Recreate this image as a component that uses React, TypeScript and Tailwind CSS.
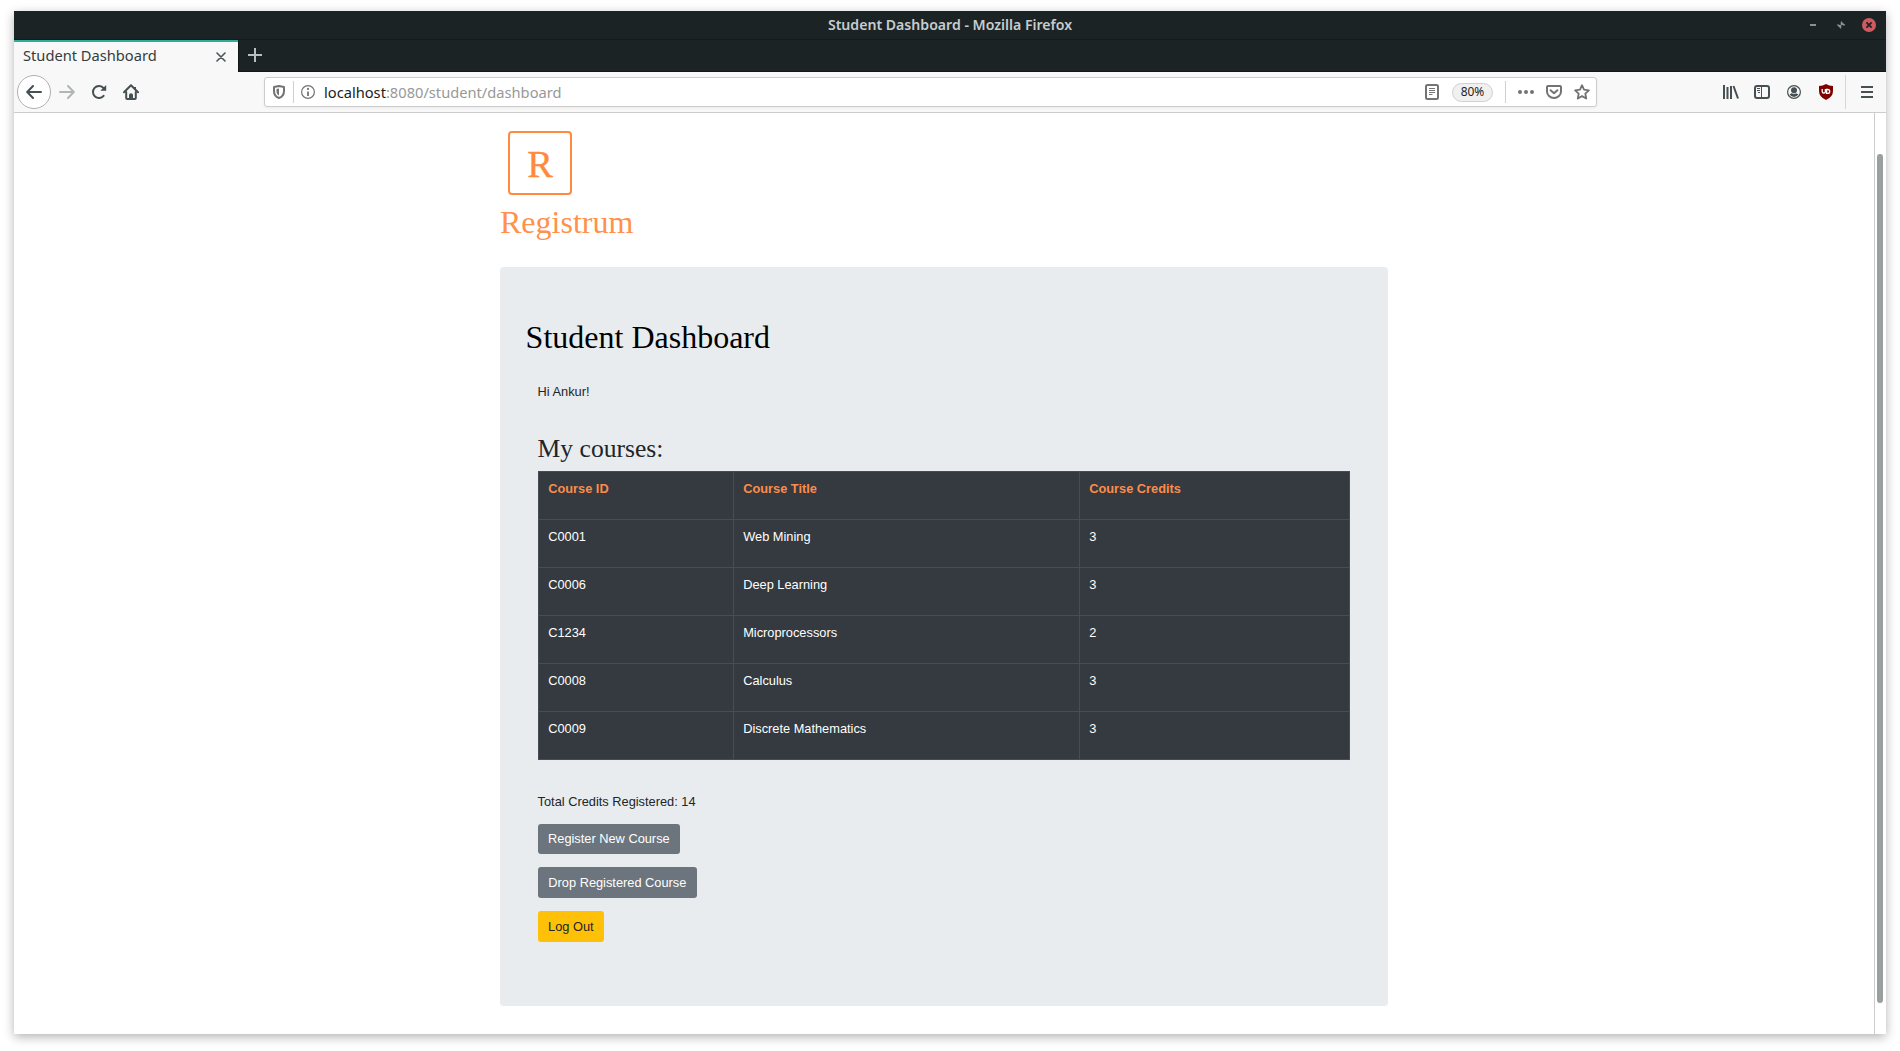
import React from "react";

const courses = [
  { id: "C0001", title: "Web Mining", credits: 3 },
  { id: "C0006", title: "Deep Learning", credits: 3 },
  { id: "C1234", title: "Microprocessors", credits: 2 },
  { id: "C0008", title: "Calculus", credits: 3 },
  { id: "C0009", title: "Discrete Mathematics", credits: 3 },
];

type IconProps = { className?: string; children: React.ReactNode };

function Icon({ className = "", children }: IconProps) {
  return (
    <svg
      viewBox="0 0 16 16"
      fill="none"
      stroke="currentColor"
      strokeWidth="2"
      strokeLinecap="round"
      strokeLinejoin="round"
      className={`size-4 shrink-0 ${className}`}
    >
      {children}
    </svg>
  );
}

function TitleBar() {
  return (
    <div className="relative flex h-7 shrink-0 items-center justify-center">
      <span className="text-[14.1px] leading-7 font-semibold text-[#c6cdd0]">Student Dashboard - Mozilla Firefox</span>
      <div className="absolute top-0 right-[10px] flex h-7 items-center">
        <div className="mr-[21px] h-[2px] w-[6px] bg-[#899294]" />
        <svg viewBox="0 0 8 8" fill="#899294" className="mr-[17px] size-2">
          <path d="M4 0v3.500H8V4.500H6.500L3.500 3.500zM4 8V4H0V3.500h1.500L4.500 4.500z" />
          <path d="M4 0L8 4H4zM0 4h4v4z" />
        </svg>
        <svg viewBox="0 0 14 14" className="size-3.5">
          <circle cx="7" cy="7" r="7" fill="#d05a61" />
          <path d="M4.4 4.4l5.2 5.2M9.6 4.4L4.4 9.6" stroke="#1c2325" strokeWidth="1.8" />
        </svg>
      </div>
    </div>
  );
}

function TabStrip() {
  return (
    <div className="flex h-[33px] shrink-0 border-t border-[#151b1c]">
      <div className="flex w-[224px] items-center border-t-2 border-[#2eae98] bg-[#f8f8f8] pr-3 pl-[9px]">
        <span className="flex-1 pb-[5px] text-[14.67px] leading-5 text-[#343c3e]">Student Dashboard</span>
        <svg viewBox="0 0 10 10" stroke="#4c5356" strokeWidth="1.6" strokeLinecap="round" className="-mt-px size-[10px]">
          <path d="M1 1l8 8M9 1L1 9" />
        </svg>
      </div>
      <div className="flex flex-1 items-center border-b border-l border-[#111617] pl-[9px]">
        <svg viewBox="0 0 14 14" stroke="#b9bfc1" strokeWidth="2" className="-mt-px size-3.5">
          <path d="M7 0v14M0 7h14" />
        </svg>
      </div>
    </div>
  );
}

function AddressBar() {
  return (
    <div className="ml-[125px] flex h-[30px] w-[1333px] items-center rounded-[3px] border border-[#cccccc] bg-white pl-[7px] text-[#737373] shadow-[0_1px_3px_rgba(0,0,0,0.06)]">
      <svg viewBox="0 0 12 14" fill="none" className="ml-px h-3.5 w-3 shrink-0">
        <path
          d="M1 1.9Q3.5 1.6 6 1Q8.500 1.600 11 1.900V6C11 9.500 9 12 6 13C3 12 1 9.500 1 6Z"
          stroke="#737373"
          strokeWidth="2"
          strokeLinejoin="round"
        />
        <path d="M6 3.500Q4.500 3.900 3.500 4V6.500C3.500 8.500 4.500 9.800 6 10.500Z" fill="#737373" />
      </svg>
      <div className="ml-2 h-[22px] w-px bg-[#cfcfcf]" />
      <svg viewBox="0 0 14 14" fill="none" className="ml-[7px] size-3.5 shrink-0">
        <circle cx="7" cy="7" r="6.4" stroke="#737373" strokeWidth="1.2" />
        <circle cx="7" cy="3.900" r="1.1" fill="#737373" />
        <path d="M7 6.500v4.500" stroke="#737373" strokeWidth="1.8" />
      </svg>
      <div className="ml-[9px] flex-1 text-[14.67px] leading-5 text-[#989898]">
        <span className="text-[#1c2022]">localhost</span>:8080/student/dashboard
      </div>
      <svg viewBox="0 0 14 16" fill="none" stroke="#737373" className="h-4 w-3.5 shrink-0">
        <rect x="1" y="1" width="12" height="14" rx="1.500" strokeWidth="2" />
        <path d="M4 4.500h6M4 6.500h6M4 8.500h6M4 10.500h3.500" strokeWidth="1" />
      </svg>
      <div className="ml-[13px] flex h-[19px] w-[41px] items-center justify-center rounded-full border border-[#d0d0d0] bg-[#f0f0f0] text-[12px] leading-none text-[#1f2426]">
        80%
      </div>
      <div className="ml-3 h-[22px] w-px bg-[#cfcfcf]" />
      <svg viewBox="0 0 16 4" fill="#737373" className="ml-3 h-1 w-4 shrink-0">
        <circle cx="2" cy="2" r="2" />
        <circle cx="8" cy="2" r="2" />
        <circle cx="14" cy="2" r="2" />
      </svg>
      <Icon className="ml-3">
        <path d="M2 2h12q1 0 1 1v4.500a7 6.500 0 0 1-14 0V3q0-1 1-1z" />
        <path d="M4.600 6.200L8 9.300l3.400-3.100" />
      </Icon>
      <Icon className="mr-[6px] ml-3">
        <path
          strokeWidth="1.8"
          d="M8 1.200l2 4.500 4.900.6-3.600 3.300.95 4.900L8 12.100l-4.250 2.400.95-4.900L1.100 6.300 6 5.700z"
        />
      </Icon>
    </div>
  );
}

function ToolBar() {
  return (
    <div className="flex h-[41px] shrink-0 items-center border-b border-[#cccccc] bg-[#f8f8f8] pl-[3px] text-[#464f52]">
      <div className="flex size-[34px] items-center justify-center rounded-full border border-[#b0b0b0] bg-white">
        <Icon>
          <path d="M15 8H1.500M7 2L1.200 8 7 14" />
        </Icon>
      </div>
      <Icon className="ml-2 text-[#b2b5b6]">
        <path d="M1 8h13.500M9 2l5.800 6L9 14" />
      </Icon>
      <Icon className="ml-4">
        <path d="M12.600 11.800A6 6 0 1 1 12.200 3.700" />
        <path d="M15.200 1v5.800H9.300z" fill="currentColor" stroke="none" />
      </Icon>
      <Icon className="ml-4">
        <path d="M1 8.300L8 1.300l7 7" />
        <path d="M3.200 8v6q0 1 1 1h7.600q1 0 1-1V8" />
        <path d="M6 15v-4q0-1.800 2-1.800t2 1.800v4z" fill="currentColor" stroke="none" />
        <path d="M12 3v2" strokeLinecap="butt" />
      </Icon>
      <AddressBar />
      <div className="ml-[126px] flex items-center">
        <svg viewBox="0 0 16 14" fill="none" stroke="currentColor" className="h-3.5 w-4">
          <path d="M1 0v14M4.500 2v12M8 1v13M10.500 1L15 13.500" strokeWidth="2" />
        </svg>
        <svg viewBox="0 0 16 14" fill="none" stroke="currentColor" className="ml-[15px] h-3.5 w-4">
          <rect x="1" y="1" width="14" height="12" rx="2" strokeWidth="2" />
          <path d="M7.500 1v12" strokeWidth="1" />
          <path d="M3 3.500h3M3 5.500h3M4 7.500h2" strokeWidth="1" />
        </svg>
        <svg viewBox="0 0 14 14" fill="none" stroke="currentColor" className="ml-[17px] size-3.5">
          <circle cx="7" cy="7" r="6.400" strokeWidth="1.200" />
          <circle cx="7" cy="5.200" r="3" fill="currentColor" stroke="none" />
          <path d="M2.600 9.200Q4.500 8.500 4.800 8.300Q7 9.800 9.200 8.300Q9.600 8.600 11.400 9.200Q10 12 7 12T2.600 9.200z" fill="currentColor" stroke="none" />
        </svg>
        <svg viewBox="0 0 14 16" fill="none" className="ml-[18px] h-4 w-3.5">
          <path d="M7 0Q10 2 14 2V7Q14 13 7 16Q0 13 0 7V2Q4 2 7 0z" fill="#800000" />
          <path d="M3.200 5v2.400a1.600 1.600 0 0 0 3.200 0V5M7.600 5.500h1.200a1.900 1.900 0 0 1 0 3.800H7.600z" stroke="#ffffff" strokeWidth="1.300" />
        </svg>
        <div className="ml-3 h-[34px] w-px bg-[#d7d7d7]" />
        <svg viewBox="0 0 12 12" stroke="currentColor" strokeWidth="2" className="ml-[15px] size-3">
          <path d="M0 1h12M0 6h12M0 11h12" />
        </svg>
      </div>
    </div>
  );
}

function Logo() {
  return (
    <div className="ml-2 flex size-16 items-center justify-center rounded-[4px] border-2 border-[#ff8a3d]">
      <span className="relative top-px font-['Liberation_Serif',serif] text-[38.5px] leading-none text-[#ff8a3d] [-webkit-text-stroke:0.3px_#ff8a3d]">
        R
      </span>
    </div>
  );
}

function CourseTable() {
  const cell = "h-12 border border-[#454d55] px-[9.6px] pt-[7px] text-left align-top leading-[19px]";
  return (
    <table className="mt-[7px] w-[812px] table-fixed border-collapse bg-[#343a40] text-white">
      <colgroup>
        <col className="w-[195px]" />
        <col className="w-[346px]" />
        <col />
      </colgroup>
      <thead>
        <tr className="font-bold text-[#fb8c4a]">
          <th className={cell}>Course ID</th>
          <th className={cell}>Course Title</th>
          <th className={cell}>Course Credits</th>
        </tr>
      </thead>
      <tbody>
        {courses.map((c) => (
          <tr key={c.id}>
            <td className={cell}>{c.id}</td>
            <td className={cell}>{c.title}</td>
            <td className={cell}>{c.credits}</td>
          </tr>
        ))}
      </tbody>
    </table>
  );
}

function Dashboard() {
  return (
    <main className="ml-[486px] w-[888px] pt-[18px] font-['Liberation_Sans',Arial,sans-serif] text-[12.8px] text-[#212529]">
      <Logo />
      <h1 className="mt-[8px] font-['Liberation_Serif',serif] text-[32px] leading-[38px] text-[#ff914d]">Registrum</h1>
      <section className="mt-[26px] h-[739px] rounded-[4px] bg-[#e8ecef] pt-[51px] pl-[25.6px]">
        <h2 className="font-['Liberation_Serif',serif] text-[32px] leading-[38px] text-black">Student Dashboard</h2>
        <div className="pl-[12px]">
          <p className="mt-[26px] leading-[19px]">Hi Ankur!</p>
          <h3 className="mt-[32px] font-['Liberation_Serif',serif] text-[25.6px] leading-[31px]">My courses:</h3>
          <CourseTable />
          <p className="mt-[32px] leading-[19px]">Total Credits Registered: 14</p>
          <div className="mt-[13px] flex flex-col items-start gap-[13px]">
            <button className="h-[30px] w-[142px] rounded-[3px] bg-[#6c757d] pl-[0.5px] text-white">Register New Course</button>
            <button className="h-[31px] w-[159px] rounded-[3px] bg-[#6c757d] pl-[0.5px] text-white">Drop Registered Course</button>
            <button className="h-[31px] w-[66px] rounded-[3px] bg-[#ffc107] pl-[0.5px] text-[#212529]">Log Out</button>
          </div>
        </div>
      </section>
    </main>
  );
}

export default function App() {
  return (
    <div className="h-[1051px] w-[1900px] overflow-hidden bg-white px-3.5 pt-[11px] pb-[17px] font-['Noto_Sans',sans-serif]">
      <div className="flex h-full flex-col bg-[#1c2325] shadow-[0_3px_10px_rgba(0,0,0,0.3)]">
        <TitleBar />
        <TabStrip />
        <ToolBar />
        <div className="flex min-h-0 flex-1 bg-white">
          <div className="flex-1">
            <Dashboard />
          </div>
          <div className="w-3 border-l border-[#cccccc] pt-[41px] pl-[2px]">
            <div className="h-[849px] w-[6px] rounded-full bg-[#9a9f9f]" />
          </div>
        </div>
      </div>
    </div>
  );
}
